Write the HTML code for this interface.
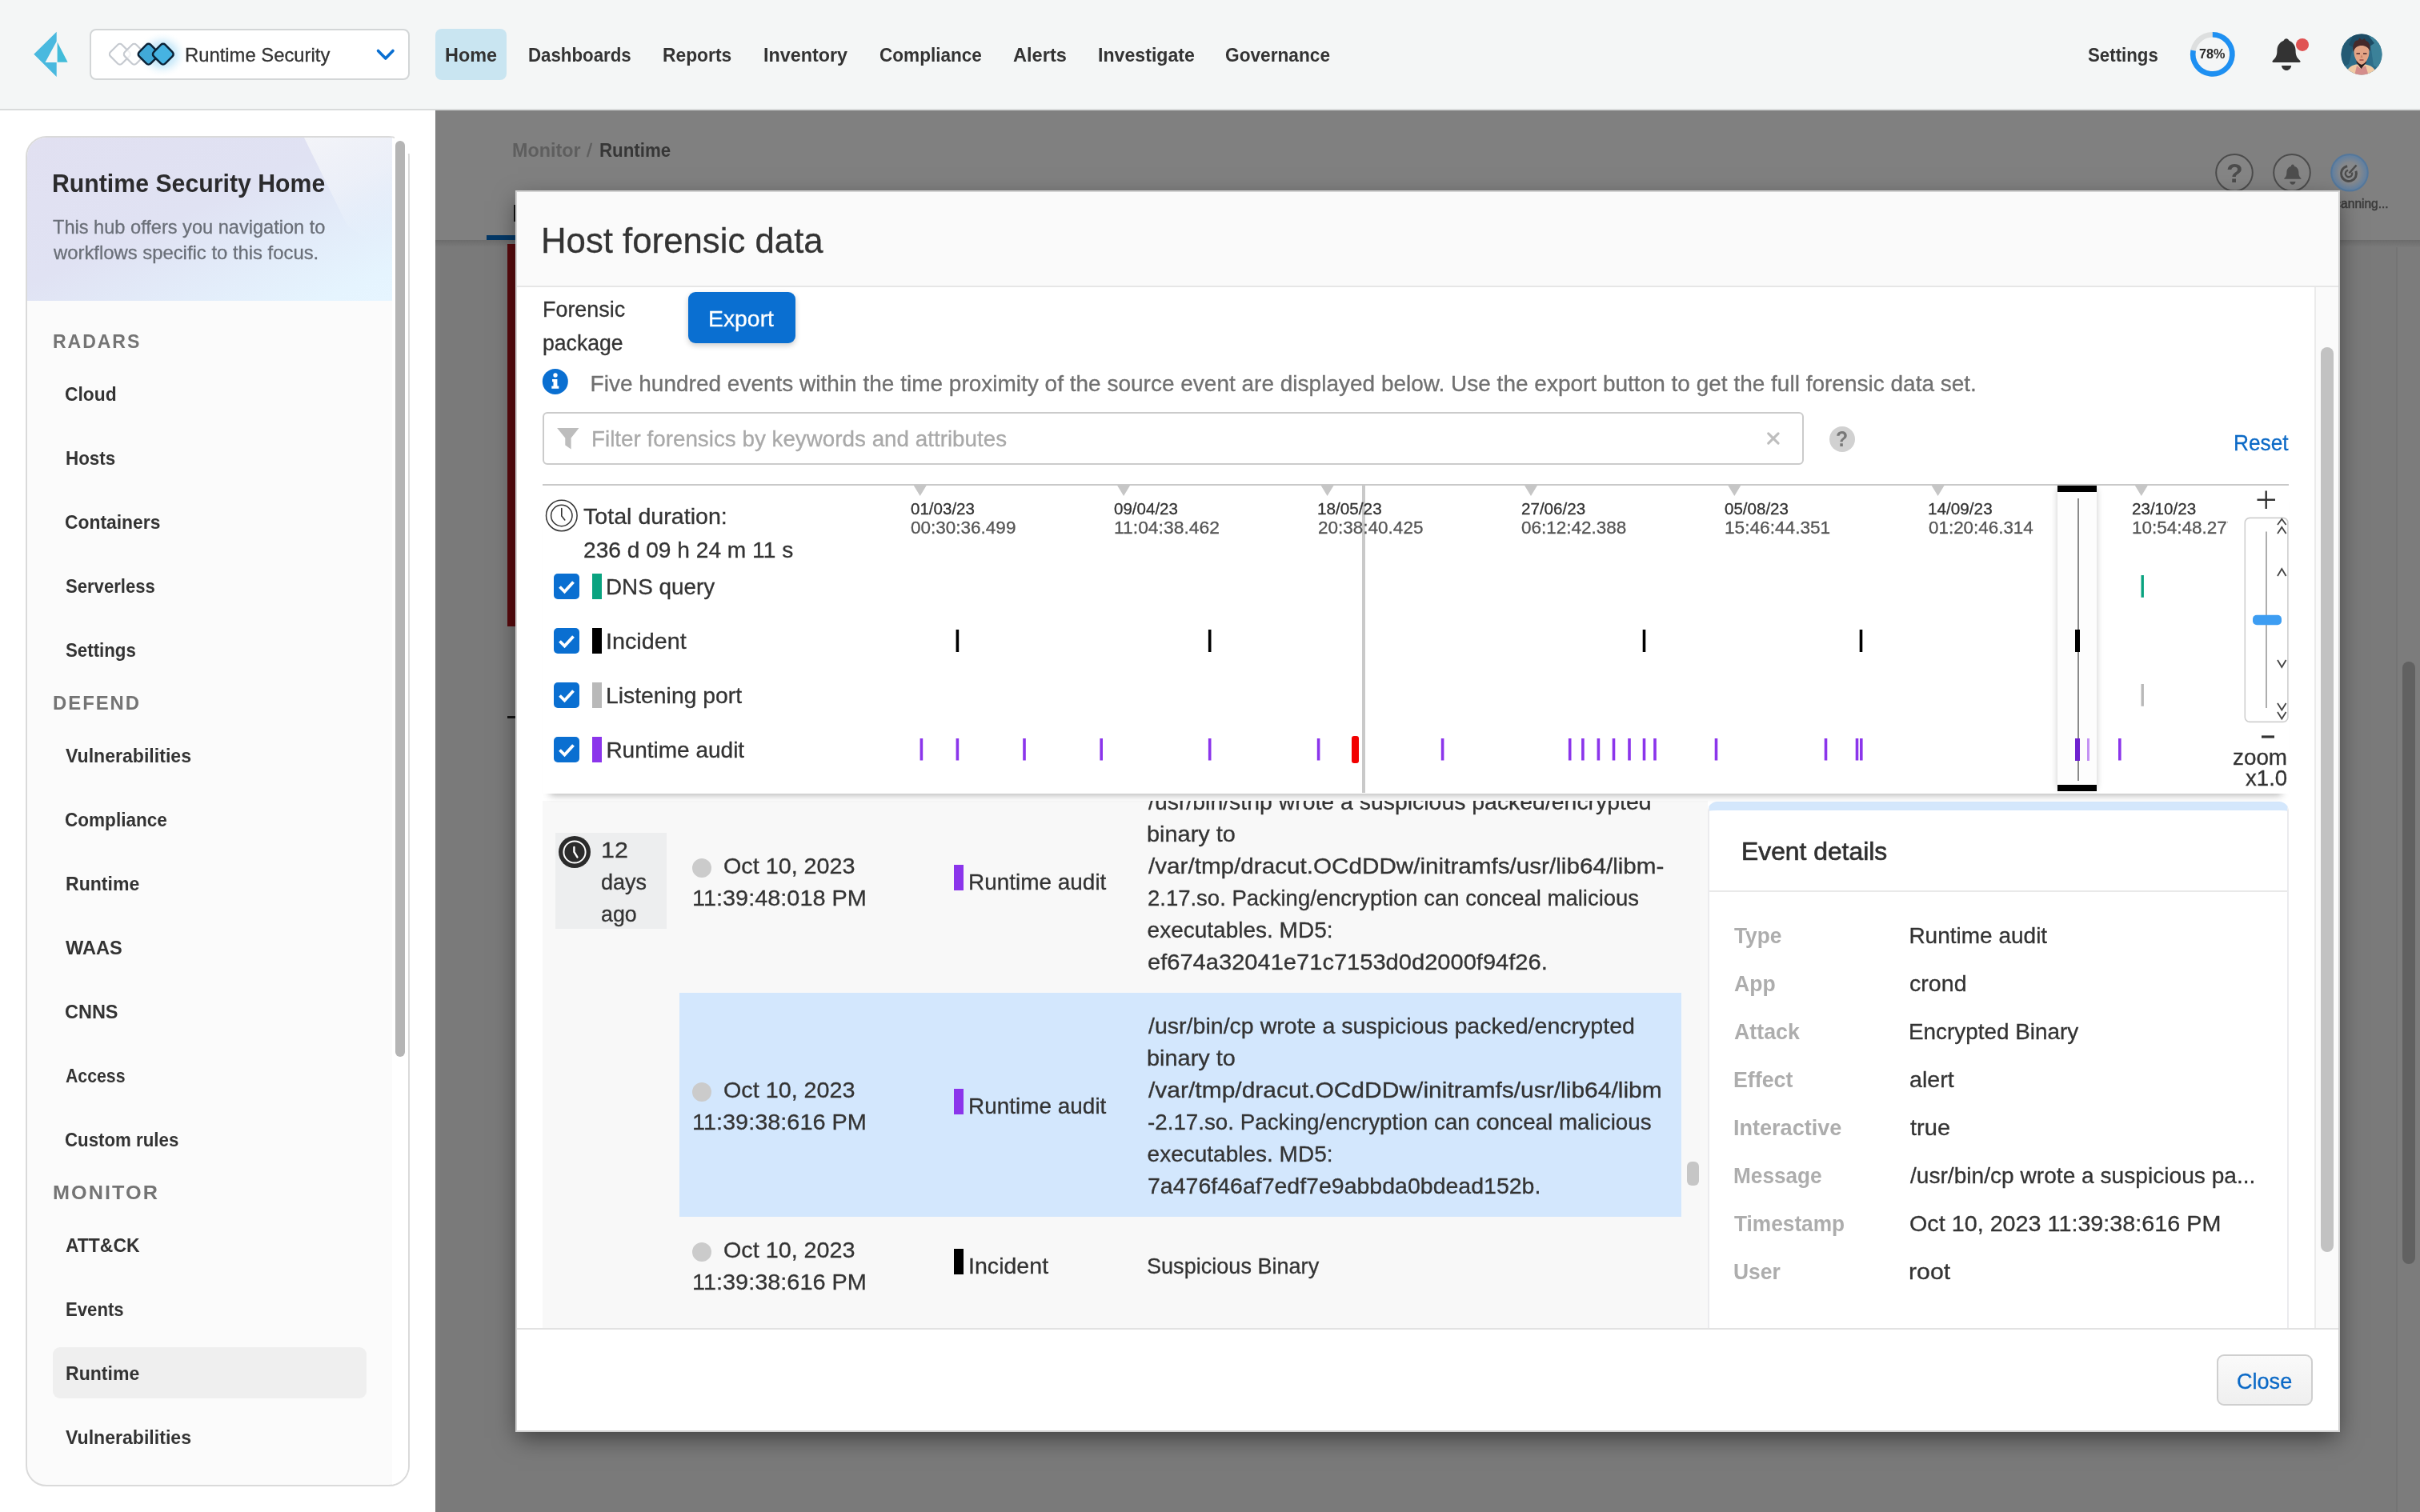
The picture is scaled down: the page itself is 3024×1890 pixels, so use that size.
<!DOCTYPE html>
<html lang="en"><head><meta charset="utf-8"><title>Host forensic data</title>
<style>
html,body{margin:0;padding:0}
body{width:3024px;height:1890px;overflow:hidden;position:relative;background:#fff;font-family:"Liberation Sans",sans-serif;color:#333}
div,span,svg{position:absolute;box-sizing:border-box}
#root{left:0;top:0;width:3024px;height:1890px;overflow:hidden;will-change:transform}
@media (max-width:1600px){html{zoom:.5}}
.t{white-space:nowrap;line-height:1;transform-origin:0 0;display:block;-webkit-text-stroke:.3px currentColor}
.b{font-weight:700;-webkit-text-stroke:0}

</style></head><body><div id="root">
<div style="left:0px;top:0px;width:3024px;height:138px;background:#f4f6f6;border-bottom:2px solid #d9dbdb"></div>
<svg style="left:36px;top:34px" width="56" height="68" viewBox="36 34 56 68"><polygon points="42.3,67.7 70.7,39.8 70.7,51.8 56.5,77.9 70.7,77.9 70.7,95.9" fill="#49b9df"/><polygon points="71.6,52.6 84.6,77.7 71.6,77.7" fill="#42bcd9"/></svg>
<div style="left:112px;top:36px;width:400px;height:64px;background:#fff;border:2px solid #d3d6d7;border-radius:8px"></div>
<svg style="left:128px;top:38px" width="110" height="60" viewBox="128 38 110 60"><defs><radialGradient id="glow"><stop offset="0" stop-color="#8fd2f2" stop-opacity=".95"/><stop offset=".55" stop-color="#bfe5f8" stop-opacity=".6"/><stop offset="1" stop-color="#fff" stop-opacity="0"/></radialGradient></defs><ellipse cx="203" cy="68" rx="32" ry="29" fill="url(#glow)"/><rect x="-10.2" y="-10.2" width="20.4" height="20.4" rx="3.8" transform="translate(149.8 67.7) rotate(45)" fill="#fff" stroke="#c6cad0" stroke-width="2.2"/><rect x="-10.2" y="-10.2" width="20.4" height="20.4" rx="3.8" transform="translate(167.7 67.7) rotate(45)" fill="#fff" fill-opacity=".75" stroke="#c6cad0" stroke-width="2.2"/><rect x="-10.2" y="-10.2" width="20.4" height="20.4" rx="3.8" transform="translate(185.6 67.7) rotate(45)" fill="#41a9d8" stroke="#0b2236" stroke-width="2.5"/><rect x="-10.2" y="-10.2" width="20.4" height="20.4" rx="3.8" transform="translate(203.8 67.7) rotate(45)" fill="#46b3e2" stroke="#0b2236" stroke-width="2.5"/></svg>
<span class="t" style="left:230.85px;top:57px;font-size:24px;transform:scaleX(0.9921);">Runtime Security</span>
<svg style="left:468px;top:58px" width="28" height="22" viewBox="468 58 28 22"><polyline points="472.5,63.5 481.8,73 491,63.5" fill="none" stroke="#0a6fd1" stroke-width="3.6" stroke-linecap="round" stroke-linejoin="round"/></svg>
<div style="left:544px;top:36px;width:89px;height:64px;background:#c9e5f1;border-radius:8px"></div>
<span class="t b" style="left:555.62px;top:57px;font-size:24px;transform:scaleX(0.9754);">Home</span>
<span class="t b" style="left:660.2px;top:57px;font-size:24px;transform:scaleX(0.9283);">Dashboards</span>
<span class="t b" style="left:828.46px;top:57px;font-size:24px;transform:scaleX(0.9504);">Reports</span>
<span class="t b" style="left:954.03px;top:57px;font-size:24px;transform:scaleX(0.9719);">Inventory</span>
<span class="t b" style="left:1099.26px;top:57px;font-size:24px;transform:scaleX(0.9403);">Compliance</span>
<span class="t b" style="left:1266.24px;top:57px;font-size:24px;transform:scaleX(0.9838);">Alerts</span>
<span class="t b" style="left:1371.64px;top:57px;font-size:24px;transform:scaleX(0.9646);">Investigate</span>
<span class="t b" style="left:1531.26px;top:57px;font-size:24px;transform:scaleX(0.9445);">Governance</span>
<span class="t b" style="left:2608.77px;top:57px;font-size:24px;transform:scaleX(0.928);">Settings</span>
<svg style="left:2730px;top:34px" width="70" height="68" viewBox="2730 34 70 68"><circle cx="2764.8" cy="67.8" r="24.6" fill="none" stroke="#dddfdf" stroke-width="6.6"/><path d="M2764.80 43.20 A24.6 24.6 0 1 1 2740.64 63.19" fill="none" stroke="#1e90f2" stroke-width="6.6"/></svg>
<span class="t b" style="left:2748.3px;top:60px;font-size:15.6px;color:#2b2b2b;transform:scaleX(1.042);">78%</span>
<svg style="left:2834px;top:42px" width="56" height="52" viewBox="2834 42 56 52"><path d="M2857 48.2 c-1.6 0 -2.6 1.2 -3.4 2.6 c-5.2 2.2 -8.2 6.6 -8.2 12.8 c0 5.6 -1.4 8.6 -5.4 12.2 c-1.2 1.2 -.6 2.2 1 2.2 h32 c1.6 0 2.2 -1 1 -2.2 c-4 -3.6 -5.4 -6.6 -5.4 -12.2 c0 -6.2 -3 -10.6 -8.2 -12.8 c-.8 -1.4 -1.8 -2.6 -3.4 -2.6 z" fill="#333"/><path d="M2851 82 h12.2 c-.4 3.6 -3 6 -6.1 6 s-5.7 -2.4 -6.1 -6 z" fill="#333"/><circle cx="2877" cy="55.9" r="8" fill="#e05353"/></svg>
<svg style="left:2924px;top:41px" width="54" height="54" viewBox="-27 -27 54 54"><defs><clipPath id="av"><circle r="25.5"/></clipPath></defs><g clip-path="url(#av)"><rect x="-27" y="-27" width="54" height="54" fill="#2d6d89"/><polygon points="-27,-27 -6,-27 -16,12 -27,18" fill="#235a74"/><polygon points="27,-27 9,-27 15,14 27,20" fill="#3b8199"/><polygon points="-16,-12 0,-3 16,-14 6,-27 -9,-27" fill="#1d4b64"/><path d="M-20 27 c1 -9 6 -13 13 -14.5 h12 c8 1.5 13 5.500 14 14.500 z" fill="#f0c9a3"/><path d="M-9 27 l3 -13 l5 4 l6 -4 l4 13 z" fill="#d48d8b"/><path d="M-6.500 10 l6 8 l6.500 -8 l-1 -6 h-10.500 z" fill="#2a1a1b"/><path d="M-9.500 -3 c0 -8 4 -12 9.500 -12 s9.500 4 9.500 12 c0 7 -4 14 -9.500 16 c-5.500 -2 -9.500 -9 -9.500 -16 z" fill="#e3a485"/><path d="M-10.500 -3 c-1.500 -9 2 -15.500 6 -14.500 l2 -3 l3 2.500 l3 -2 l2 3 c4 1 6 6 5 13 c-2.500 -5 -5.500 -7 -10.500 -7 s-8 2 -10.500 8 z" fill="#45292a"/><path d="M-6.500 -1 h4.500 M2 -1 h4.500" stroke="#4a2628" stroke-width="1.600"/><path d="M-2.500 7 h5" stroke="#9c4a45" stroke-width="1.500"/><path d="M0 0 l-1.500 4 h3" fill="#c98467"/></g></svg>
<div style="left:32px;top:170px;width:480px;height:1688px;background:#fbfbfb;border:2px solid #dadada;border-radius:26px;overflow:hidden"><svg style="left:0;top:0" width="457" height="204" viewBox="0 0 457 204"><defs><linearGradient id="sg" x1="0" y1="0" x2="1" y2="1"><stop offset="0" stop-color="#e1e0f1"/><stop offset=".45" stop-color="#e0e2f3"/><stop offset=".72" stop-color="#e3edfa"/><stop offset=".9" stop-color="#e5f4fe"/><stop offset="1" stop-color="#e6f5ff"/></linearGradient><linearGradient id="sw" x1="0" y1="0" x2=".35" y2="1"><stop offset="0" stop-color="#f4f5f9" stop-opacity=".95"/><stop offset=".5" stop-color="#f0f3f9" stop-opacity=".7"/><stop offset="1" stop-color="#e8f2fc" stop-opacity="0"/></linearGradient></defs><rect width="457" height="204" fill="url(#sg)"/><polygon points="346,0 457,0 457,150 400,110" fill="url(#sw)"/></svg><div style="left:456px;top:0;width:22px;height:1688px;background:#fff"></div></div>
<div style="left:493px;top:168px;width:20px;height:23.5px;background:#fff"></div>
<div style="left:494.3px;top:175.6px;width:11.6px;height:1145.4px;background:#b5b5b5;border-radius:6px"></div>
<span class="t b" style="left:65.31px;top:213px;font-size:32px;color:#2b2b2d;transform:scaleX(0.9453);">Runtime Security Home</span>
<span class="t" style="left:66.06px;top:272px;font-size:24px;color:#6a6f78;transform:scaleX(0.9827);">This hub offers you navigation to</span>
<span class="t" style="left:66.6px;top:304px;font-size:24px;color:#6a6f78;transform:scaleX(0.9933);">workflows specific to this focus.</span>
<span class="t b" style="left:65.85px;top:415px;font-size:24px;color:#747474;letter-spacing:2px;transform:scaleX(0.9612);">RADARS</span>
<span class="t b" style="left:81.45px;top:481px;font-size:24px;transform:scaleX(0.9496);">Cloud</span>
<span class="t b" style="left:81.79px;top:561px;font-size:24px;transform:scaleX(0.9335);">Hosts</span>
<span class="t b" style="left:81.45px;top:641px;font-size:24px;transform:scaleX(0.9523);">Containers</span>
<span class="t b" style="left:81.58px;top:721px;font-size:24px;transform:scaleX(0.9205);">Serverless</span>
<span class="t b" style="left:81.57px;top:801px;font-size:24px;transform:scaleX(0.928);">Settings</span>
<span class="t b" style="left:65.79px;top:867px;font-size:24px;color:#747474;letter-spacing:2px;transform:scaleX(0.9945);">DEFEND</span>
<span class="t b" style="left:82.4px;top:933px;font-size:24px;transform:scaleX(0.9621);">Vulnerabilities</span>
<span class="t b" style="left:81.46px;top:1013px;font-size:24px;transform:scaleX(0.9395);">Compliance</span>
<span class="t b" style="left:81.75px;top:1093px;font-size:24px;transform:scaleX(0.9604);">Runtime</span>
<span class="t b" style="left:82.4px;top:1173px;font-size:24px;transform:scaleX(0.9828);">WAAS</span>
<span class="t b" style="left:81.42px;top:1253px;font-size:24px;transform:scaleX(0.9784);">CNNS</span>
<span class="t b" style="left:81.72px;top:1333px;font-size:24px;transform:scaleX(0.8861);">Access</span>
<span class="t b" style="left:81.47px;top:1413px;font-size:24px;transform:scaleX(0.9281);">Custom rules</span>
<span class="t b" style="left:65.71px;top:1479px;font-size:24px;color:#747474;letter-spacing:2px;transform:scaleX(1.0485);">MONITOR</span>
<div style="left:66px;top:1684px;width:392px;height:64px;background:#efefef;border-radius:9px"></div>
<span class="t b" style="left:81.66px;top:1545px;font-size:24px;transform:scaleX(0.9555);">ATT&amp;CK</span>
<span class="t b" style="left:81.81px;top:1625px;font-size:24px;transform:scaleX(0.923);">Events</span>
<span class="t b" style="left:81.75px;top:1705px;font-size:24px;transform:scaleX(0.9604);">Runtime</span>
<span class="t b" style="left:82.4px;top:1785px;font-size:24px;transform:scaleX(0.9621);">Vulnerabilities</span>
<div style="left:544px;top:138px;width:2480px;height:1752px;background:#7a7a7a"></div>
<div style="left:544px;top:138px;width:2480px;height:162px;background:#808080"></div>
<div style="left:544px;top:300px;width:2480px;height:9px;background:linear-gradient(#6c6c6c,#7a7a7a)"></div>
<div style="left:2994px;top:309px;width:30px;height:1581px;background:#7c7c7c;border-left:2px solid #747474"></div>
<div style="left:3002px;top:827px;width:16px;height:753px;background:#616161;border-radius:8px"></div>
<span class="t b" style="left:639.83px;top:176px;font-size:24px;color:#5e5e5e;transform:scaleX(0.9724);">Monitor</span>
<span class="t" style="left:733.4px;top:176px;font-size:24px;color:#5e5e5e;transform:scaleX(1.0571);">/</span>
<span class="t b" style="left:749.1px;top:176px;font-size:24px;color:#363636;transform:scaleX(0.9294);">Runtime</span>
<div style="left:608px;top:294px;width:40px;height:6px;background:#043866"></div>
<div style="left:641.5px;top:256px;width:4px;height:21px;background:#111"></div>
<div style="left:634px;top:305px;width:12px;height:477.5px;background:#5a0b0e"></div>
<div style="left:634px;top:895px;width:12px;height:3px;background:#151515"></div>
<svg style="left:2760px;top:186px" width="210" height="60" viewBox="2760 186 210 60"><defs><radialGradient id="scan"><stop offset="0" stop-color="#8b8b8b"/><stop offset=".55" stop-color="#85888c"/><stop offset="1" stop-color="#5d7fa3"/></radialGradient></defs><circle cx="2792" cy="215.8" r="22.8" fill="#858585" stroke="#4c4c4c" stroke-width="2"/><circle cx="2864" cy="215.8" r="22.8" fill="#858585" stroke="#4c4c4c" stroke-width="2"/><circle cx="2936" cy="215.8" r="22.8" fill="url(#scan)" stroke="#54779b" stroke-width="2"/><path d="M2864.9 205.4 c1.1 0 1.9 .8 1.9 1.9 v.5 c3.4 .9 5.6 3.9 5.6 7.7 c0 3.6 .9 5.4 2.600 7 c.7 .7 .8 1.300 .400 1.300 h-21 c-.4 0 -.3 -.6 .400 -1.300 c1.700 -1.600 2.600 -3.400 2.600 -7 c0 -3.800 2.200 -6.800 5.600 -7.700 v-.5 c0 -1.100 .8 -1.900 1.900 -1.900 z M2861.300 227 h7.200 c-.2 2.200 -1.700 3.700 -3.600 3.700 s-3.400 -1.500 -3.600 -3.700 z" fill="#4e4e4e"/><circle cx="2935" cy="217" r="9.5" fill="none" stroke="#4c4c4c" stroke-width="3" stroke-dasharray="46 14" transform="rotate(-20 2935 217)"/><circle cx="2935" cy="217" r="4.2" fill="none" stroke="#4c4c4c" stroke-width="2.4" stroke-dasharray="20 7" transform="rotate(-20 2935 217)"/><path d="M2935.5 216.5 L2944.5 206.5" stroke="#4c4c4c" stroke-width="2.6"/></svg>
<span class="t b" style="left:2781.7px;top:199px;font-size:34px;color:#4c4c4c;transform:scaleX(0.9948);">?</span>
<span class="t" style="left:2906.72px;top:246px;font-size:16.5px;color:#3a3a3a;transform:scaleX(0.9409);-webkit-text-stroke:.45px #3a3a3a;">Scanning...</span>
<div style="left:644px;top:238px;width:2280px;height:1552px;background:#fff;border:2px solid #d2d2d2;box-shadow:0 10px 28px -3px rgba(0,0,0,.5)"></div>
<div style="left:646px;top:240px;width:2276px;height:119px;background:#fafafa;border-bottom:2px solid #e6e6e6"></div>
<span class="t" style="left:676px;top:279px;font-size:44px;transform:scaleX(0.9944);">Host forensic data</span>
<div style="left:2892px;top:359px;width:30px;height:1301px;background:#fafafa;border-left:2px solid #ebebeb"></div>
<div style="left:2900px;top:434px;width:16px;height:1131px;background:#c2c2c2;border-radius:8px"></div>
<div style="left:646px;top:1660px;width:2276px;height:128px;background:#fff;border-top:2px solid #e2e2e2"></div>
<div style="left:2770.4px;top:1693.3px;width:119.2px;height:63.4px;background:linear-gradient(#fafafa,#efefef);border:2px solid #cfcfcf;border-radius:9px"></div>
<span class="t" style="left:2795.43px;top:1713px;font-size:28px;color:#0b69c6;transform:scaleX(0.9668);">Close</span>
<span class="t" style="left:677.88px;top:373px;font-size:28px;transform:scaleX(0.9607);">Forensic</span>
<span class="t" style="left:678.05px;top:415px;font-size:28px;transform:scaleX(0.95);">package</span>
<div style="left:860px;top:365px;width:134px;height:64px;background:#0a6fd1;border-radius:9px;box-shadow:0 3px 7px rgba(0,0,0,.2)"></div>
<span class="t" style="left:885.37px;top:385px;font-size:28px;color:#fff;transform:scaleX(1.0127);">Export</span>
<svg style="left:676px;top:459px" width="36" height="36" viewBox="676 459 36 36"><circle cx="693.8" cy="476.9" r="16" fill="#0a6fd1"/><circle cx="694" cy="469" r="2.7" fill="#fff"/><path d="M690 474 h6.4 v8.6 h1.9 v3.2 h-9 v-3.2 h2.2 v-5.4 h-1.500 z" fill="#fff"/></svg>
<span class="t" style="left:737.6px;top:466px;font-size:28px;color:#707070;">Five hundred events within the time proximity of the source event are displayed below. Use the export button to get the full forensic data set.</span>
<div style="left:678px;top:515px;width:1576px;height:66px;background:#fff;border:2px solid #cbcbcb;border-radius:6px"></div>
<svg style="left:694px;top:533px" width="32" height="30" viewBox="694 533 32 30"><polygon points="696.1,535.1 723.5,535.1 713.6,547.6 713.6,561.5 706.3,556.4 706.3,547.6" fill="#bdbdbd"/></svg>
<span class="t" style="left:739.41px;top:535px;font-size:28px;color:#a9a9a9;transform:scaleX(0.9927);">Filter forensics by keywords and attributes</span>
<svg style="left:2204px;top:537px" width="22" height="22" viewBox="2204 537 22 22"><path d="M2209.7 541.9 l12.4 12.2 M2222.1 541.9 l-12.4 12.2" stroke="#bebebe" stroke-width="3.1" stroke-linecap="round"/></svg>
<div style="left:2285.9px;top:532.7px;width:32px;height:32px;background:#d1d1d1;border-radius:16px"></div>
<span class="t b" style="left:2294.4px;top:536px;font-size:27px;color:#787878;transform:scaleX(0.92);">?</span>
<span class="t" style="left:2791.12px;top:540px;font-size:28px;color:#0b69c6;transform:scaleX(0.938);">Reset</span>
<div style="left:678px;top:991px;width:1456px;height:669px;background:#f8f8f8"></div>
<div style="left:694px;top:1041px;width:139px;height:120px;background:#edeeef"></div>
<svg style="left:696px;top:1043px" width="44" height="44" viewBox="696 1043 44 44"><circle cx="718" cy="1065" r="20" fill="#2b2b2b"/><circle cx="718" cy="1065" r="13.6" fill="none" stroke="#fff" stroke-width="2"/><path d="M717.4 1059 V1065 L721.4 1071.4" fill="none" stroke="#fff" stroke-width="2.4" stroke-linecap="round"/></svg>
<span class="t" style="left:751.23px;top:1049px;font-size:28px;transform:scaleX(1.0857);">12</span>
<span class="t" style="left:751.43px;top:1089px;font-size:28px;transform:scaleX(0.9652);">days</span>
<span class="t" style="left:751.44px;top:1129px;font-size:28px;transform:scaleX(0.9556);">ago</span>
<div style="left:849px;top:1241px;width:1252px;height:279.5px;background:#d3e7fd"></div>
<div style="left:864.7px;top:1072.8px;width:24px;height:24px;background:#cbcbcb;border-radius:12px"></div>
<span class="t" style="left:904.17px;top:1069px;font-size:28px;transform:scaleX(1.0263);">Oct 10, 2023</span>
<span class="t" style="left:864.94px;top:1109px;font-size:28px;transform:scaleX(1.0319);">11:39:48:018 PM</span>
<div style="left:1192px;top:1081px;width:12px;height:32px;background:#8b35eb"></div>
<span class="t" style="left:1210.2px;top:1089px;font-size:28px;transform:scaleX(0.9977);">Runtime audit</span>
<span class="t" style="left:1434.6px;top:989px;font-size:28px;transform:scaleX(1.0148);">/usr/bin/strip wrote a suspicious packed/encrypted</span>
<span class="t" style="left:1432.7px;top:1029px;font-size:28px;transform:scaleX(1.0321);">binary to</span>
<span class="t" style="left:1434.6px;top:1069px;font-size:28px;transform:scaleX(1.0592);">/var/tmp/dracut.OCdDDw/initramfs/usr/lib64/libm-</span>
<span class="t" style="left:1433.62px;top:1109px;font-size:28px;transform:scaleX(0.9814);">2.17.so. Packing/encryption can conceal malicious</span>
<span class="t" style="left:1433.6px;top:1149px;font-size:28px;">executables. MD5:</span>
<span class="t" style="left:1433.56px;top:1189px;font-size:28px;transform:scaleX(1.0388);">ef674a32041e71c7153d0d2000f94f26.</span>
<div style="left:864.7px;top:1352.8px;width:24px;height:24px;background:#cbcbcb;border-radius:12px"></div>
<span class="t" style="left:904.17px;top:1349px;font-size:28px;transform:scaleX(1.0263);">Oct 10, 2023</span>
<span class="t" style="left:864.94px;top:1389px;font-size:28px;transform:scaleX(1.0319);">11:39:38:616 PM</span>
<div style="left:1192px;top:1361px;width:12px;height:32px;background:#8b35eb"></div>
<span class="t" style="left:1210.2px;top:1369px;font-size:28px;transform:scaleX(0.9977);">Runtime audit</span>
<span class="t" style="left:1434.6px;top:1269px;font-size:28px;transform:scaleX(1.0198);">/usr/bin/cp wrote a suspicious packed/encrypted</span>
<span class="t" style="left:1432.7px;top:1309px;font-size:28px;transform:scaleX(1.0321);">binary to</span>
<span class="t" style="left:1434.6px;top:1349px;font-size:28px;transform:scaleX(1.0713);">/var/tmp/dracut.OCdDDw/initramfs/usr/lib64/libm</span>
<span class="t" style="left:1433.61px;top:1389px;font-size:28px;transform:scaleX(0.9915);">-2.17.so. Packing/encryption can conceal malicious</span>
<span class="t" style="left:1433.6px;top:1429px;font-size:28px;">executables. MD5:</span>
<span class="t" style="left:1433.58px;top:1469px;font-size:28px;transform:scaleX(1.0179);">7a476f46af7edf7e9abbda0bdead152b.</span>
<div style="left:864.7px;top:1552.8px;width:24px;height:24px;background:#cbcbcb;border-radius:12px"></div>
<span class="t" style="left:904.17px;top:1549px;font-size:28px;transform:scaleX(1.0263);">Oct 10, 2023</span>
<span class="t" style="left:864.94px;top:1589px;font-size:28px;transform:scaleX(1.0319);">11:39:38:616 PM</span>
<div style="left:1192px;top:1561px;width:12px;height:32px;background:#000"></div>
<span class="t" style="left:1209.56px;top:1569px;font-size:28px;transform:scaleX(1.0208);">Incident</span>
<span class="t" style="left:1433.11px;top:1569px;font-size:28px;transform:scaleX(0.9668);">Suspicious Binary</span>
<div style="left:2107.5px;top:1451.5px;width:15px;height:30px;background:#c6c6c6;border-radius:6px"></div>
<div style="left:678px;top:985px;width:1456px;height:16.2px;background:#fff"></div>
<div style="left:2134px;top:1002px;width:726px;height:658px;overflow:hidden"><div style="left:0;top:0;width:726px;height:700px;background:#fff;border:2px solid #ebebee;border-top:11px solid #d4e7fc;border-radius:12px 12px 0 0"></div></div>
<div style="left:2136px;top:1113px;width:722px;height:2px;background:#e9e9e9"></div>
<span class="t" style="left:2175.79px;top:1048px;font-size:32px;color:#303030;transform:scaleX(0.9944);-webkit-text-stroke:.7px #303030;">Event details</span>
<span class="t b" style="left:2167.4px;top:1156px;font-size:28px;color:#adadad;transform:scaleX(0.9372);">Type</span>
<span class="t" style="left:2385.4px;top:1156px;font-size:28px;">Runtime audit</span>
<span class="t b" style="left:2166.55px;top:1216px;font-size:28px;color:#adadad;transform:scaleX(0.949);">App</span>
<span class="t" style="left:2386.38px;top:1216px;font-size:28px;transform:scaleX(1.0218);">crond</span>
<span class="t b" style="left:2166.55px;top:1276px;font-size:28px;color:#adadad;transform:scaleX(0.9554);">Attack</span>
<span class="t" style="left:2385.41px;top:1276px;font-size:28px;transform:scaleX(0.9951);">Encrypted Binary</span>
<span class="t b" style="left:2165.61px;top:1336px;font-size:28px;color:#adadad;transform:scaleX(0.955);">Effect</span>
<span class="t" style="left:2386.38px;top:1336px;font-size:28px;transform:scaleX(1.0239);">alert</span>
<span class="t b" style="left:2165.59px;top:1396px;font-size:28px;color:#adadad;transform:scaleX(0.9658);">Interactive</span>
<span class="t" style="left:2387.4px;top:1396px;font-size:28px;transform:scaleX(1.0393);">true</span>
<span class="t b" style="left:2165.65px;top:1456px;font-size:28px;color:#adadad;transform:scaleX(0.9356);">Message</span>
<span class="t" style="left:2387.4px;top:1456px;font-size:28px;transform:scaleX(1.0042);">/usr/bin/cp wrote a suspicious pa...</span>
<span class="t b" style="left:2167.4px;top:1516px;font-size:28px;color:#adadad;transform:scaleX(0.9373);">Timestamp</span>
<span class="t" style="left:2386.37px;top:1516px;font-size:28px;transform:scaleX(1.0265);">Oct 10, 2023 11:39:38:616 PM</span>
<span class="t b" style="left:2165.81px;top:1576px;font-size:28px;color:#adadad;transform:scaleX(0.9435);">User</span>
<span class="t" style="left:2385.37px;top:1576px;font-size:28px;transform:scaleX(1.0823);">root</span>
<div style="left:678px;top:605px;width:2182px;height:386.5px;background:#fff;border-top:2px solid #c9c9c9;box-shadow:0 11px 9px -9px rgba(0,0,0,.3)"></div>
<svg style="left:680px;top:622px" width="44" height="44" viewBox="680 622 44 44"><circle cx="701.8" cy="644.5" r="19.3" fill="#fff" stroke="#333" stroke-width="1.5"/><circle cx="701.8" cy="644.5" r="13.2" fill="none" stroke="#333" stroke-width="1.5"/><path d="M701.8 635.5 V645 L705.8 650" fill="none" stroke="#333" stroke-width="1.6" stroke-linecap="round"/></svg>
<span class="t" style="left:728.96px;top:632px;font-size:28px;transform:scaleX(1.0221);">Total duration:</span>
<span class="t" style="left:728.6px;top:674px;font-size:28px;transform:scaleX(1.0046);">236 d 09 h 24 m 11 s</span>
<svg style="left:692px;top:717px" width="32" height="32" viewBox="0 0 32 32"><rect width="32" height="32" rx="5" fill="#0a6fd1"/><polyline points="7.5,16.5 13.5,22.5 24.5,10.5" fill="none" stroke="#fff" stroke-width="3.8"/></svg>
<div style="left:740px;top:717px;width:12px;height:32px;background:#0aa380"></div>
<span class="t" style="left:757.41px;top:720px;font-size:28px;transform:scaleX(0.9941);">DNS query</span>
<svg style="left:692px;top:785px" width="32" height="32" viewBox="0 0 32 32"><rect width="32" height="32" rx="5" fill="#0a6fd1"/><polyline points="7.5,16.5 13.5,22.5 24.5,10.5" fill="none" stroke="#fff" stroke-width="3.8"/></svg>
<div style="left:740px;top:785px;width:12px;height:32px;background:#000"></div>
<span class="t" style="left:756.74px;top:788px;font-size:28px;transform:scaleX(1.0261);">Incident</span>
<svg style="left:692px;top:853px" width="32" height="32" viewBox="0 0 32 32"><rect width="32" height="32" rx="5" fill="#0a6fd1"/><polyline points="7.5,16.5 13.5,22.5 24.5,10.5" fill="none" stroke="#fff" stroke-width="3.8"/></svg>
<div style="left:740px;top:853px;width:12px;height:32px;background:#b9b9b9"></div>
<span class="t" style="left:757.38px;top:856px;font-size:28px;transform:scaleX(1.012);">Listening port</span>
<svg style="left:692px;top:921px" width="32" height="32" viewBox="0 0 32 32"><rect width="32" height="32" rx="5" fill="#0a6fd1"/><polyline points="7.5,16.5 13.5,22.5 24.5,10.5" fill="none" stroke="#fff" stroke-width="3.8"/></svg>
<div style="left:740px;top:921px;width:12px;height:32px;background:#8b35eb"></div>
<span class="t" style="left:757.4px;top:924px;font-size:28px;">Runtime audit</span>
<svg style="left:678px;top:605px" width="2182" height="386" viewBox="678 605 2182 386"><polygon points="1141.2,606 1158.2,606 1149.7,620" fill="#c6c6c6"/><polygon points="1395.6,606 1412.6,606 1404.1,620" fill="#c6c6c6"/><polygon points="1650.1,606 1667.1,606 1658.6,620" fill="#c6c6c6"/><polygon points="1904.5,606 1921.5,606 1913,620" fill="#c6c6c6"/><polygon points="2158.8,606 2175.8,606 2167.3,620" fill="#c6c6c6"/><polygon points="2413.1,606 2430.1,606 2421.6,620" fill="#c6c6c6"/><polygon points="2667.3,606 2684.3,606 2675.8,620" fill="#c6c6c6"/><rect x="1702" y="607" width="4" height="384" fill="#c9c9c9"/><rect x="1194.6" y="787" width="3.6" height="28" fill="#000"/><rect x="1509.9" y="787" width="3.6" height="28" fill="#000"/><rect x="2052.7" y="787" width="3.6" height="28" fill="#000"/><rect x="2323.7" y="787" width="3.6" height="28" fill="#000"/><rect x="1149.6" y="923" width="3.6" height="27.5" fill="#8b35eb"/><rect x="1194.6" y="923" width="3.6" height="27.5" fill="#8b35eb"/><rect x="1278.2" y="923" width="3.6" height="27.5" fill="#8b35eb"/><rect x="1374.4" y="923" width="3.6" height="27.5" fill="#8b35eb"/><rect x="1509.9" y="923" width="3.6" height="27.5" fill="#8b35eb"/><rect x="1645.8" y="923" width="3.6" height="27.5" fill="#8b35eb"/><rect x="1800.8" y="923" width="3.6" height="27.5" fill="#8b35eb"/><rect x="1959.9" y="923" width="3.6" height="27.5" fill="#8b35eb"/><rect x="1976.1" y="923" width="3.6" height="27.5" fill="#8b35eb"/><rect x="1995.6" y="923" width="3.6" height="27.5" fill="#8b35eb"/><rect x="2014.7" y="923" width="3.6" height="27.5" fill="#8b35eb"/><rect x="2034.2" y="923" width="3.6" height="27.5" fill="#8b35eb"/><rect x="2052.7" y="923" width="3.6" height="27.5" fill="#8b35eb"/><rect x="2066.2" y="923" width="3.6" height="27.5" fill="#8b35eb"/><rect x="2142.7" y="923" width="3.6" height="27.5" fill="#8b35eb"/><rect x="2279.7" y="923" width="3.6" height="27.5" fill="#8b35eb"/><rect x="2318.7" y="923" width="3.6" height="27.5" fill="#8b35eb"/><rect x="2324" y="923" width="3.6" height="27.5" fill="#8b35eb"/><rect x="2647" y="923" width="3.6" height="27.5" fill="#8b35eb"/><rect x="1689" y="920" width="9" height="34" rx="3" fill="#f20000"/><rect x="2675.5" y="719" width="3.4" height="27.8" fill="#0aa380"/><rect x="2675.5" y="855" width="3.4" height="27.8" fill="#b9b9b9"/></svg>
<span class="t" style="left:1137.66px;top:626px;font-size:20px;transform:scaleX(1.0265);">01/03/23</span>
<span class="t" style="left:1138.19px;top:649px;font-size:22px;color:#555;transform:scaleX(1.0229);">00:30:36.499</span>
<span class="t" style="left:1392.06px;top:626px;font-size:20px;transform:scaleX(1.0265);">09/04/23</span>
<span class="t" style="left:1391.76px;top:649px;font-size:22px;color:#555;transform:scaleX(1.0408);">11:04:38.462</span>
<span class="t" style="left:1645.81px;top:626px;font-size:20px;transform:scaleX(1.0363);">18/05/23</span>
<span class="t" style="left:1646.98px;top:649px;font-size:22px;color:#555;transform:scaleX(1.023);">20:38:40.425</span>
<span class="t" style="left:1900.77px;top:626px;font-size:20px;transform:scaleX(1.0289);">27/06/23</span>
<span class="t" style="left:1901.49px;top:649px;font-size:22px;color:#555;transform:scaleX(1.0223);">06:12:42.388</span>
<span class="t" style="left:2155.26px;top:626px;font-size:20px;transform:scaleX(1.0265);">05/08/23</span>
<span class="t" style="left:2154.98px;top:649px;font-size:22px;color:#555;transform:scaleX(1.0292);">15:46:44.351</span>
<span class="t" style="left:2408.81px;top:626px;font-size:20px;transform:scaleX(1.0363);">14/09/23</span>
<span class="t" style="left:2410.09px;top:649px;font-size:22px;color:#555;transform:scaleX(1.018);">01:20:46.314</span>
<span class="t" style="left:2663.57px;top:626px;font-size:20px;transform:scaleX(1.0289);">23/10/23</span>
<div style="left:2662.8px;top:645px;width:121.6px;height:30px;overflow:hidden"><span class="t" style="left:1.09px;top:4px;font-size:22px;color:#555;transform:scaleX(1.0215);">10:54:48.277</span></div>
<div style="left:2571px;top:611px;width:49px;height:374px;background:#fdfdfd;box-shadow:0 0 8px rgba(0,0,0,.22)"></div>
<div style="left:2571px;top:606.5px;width:49px;height:8.5px;background:#000"></div>
<div style="left:2571px;top:980.5px;width:49px;height:8.5px;background:#000"></div>
<div style="left:2595.5px;top:623px;width:2px;height:353px;background:#8a8a8a"></div>
<div style="left:2592.6px;top:787px;width:6.2px;height:28px;background:#000"></div>
<div style="left:2592.6px;top:923px;width:6.4px;height:27.5px;background:#6f22cf"></div>
<div style="left:2608.3px;top:923px;width:3.2px;height:27.5px;background:#c493f3"></div>
<svg style="left:2800px;top:608px" width="64" height="330" viewBox="2800 608 64 330"><path d="M2820.5 624.7 h22.5 M2831.7 613.5 v22.5" stroke="#333" stroke-width="2.4" fill="none"/><rect x="2805.3" y="647.4" width="53.6" height="255" rx="6" fill="#fff" stroke="#cfcfcf" stroke-width="1.6"/><path d="M2832 664.5 V885" stroke="#9a9a9a" stroke-width="1.6"/><rect x="2815" y="768.8" width="36" height="12.4" rx="5" fill="#3d9df2"/><g fill="none" stroke="#444" stroke-width="1.8"><polyline points="2846,656 2851.3,648.8 2856.6,656"/><polyline points="2846,667 2851.3,659 2856.6,667"/><polyline points="2846,720 2851.3,711 2856.6,720"/><polyline points="2846,825 2851.3,834 2856.6,825"/><polyline points="2846,879 2851.3,887.5 2856.6,879"/><polyline points="2846,890 2851.3,898.5 2856.6,890"/></g><path d="M2826 921 h16" stroke="#333" stroke-width="3.2"/></svg>
<span class="t" style="left:2790.41px;top:933px;font-size:28px;transform:scaleX(0.9939);">zoom</span>
<span class="t" style="left:2805.75px;top:959px;font-size:28px;transform:scaleX(0.9855);">x1.0</span>
</div></body></html>
